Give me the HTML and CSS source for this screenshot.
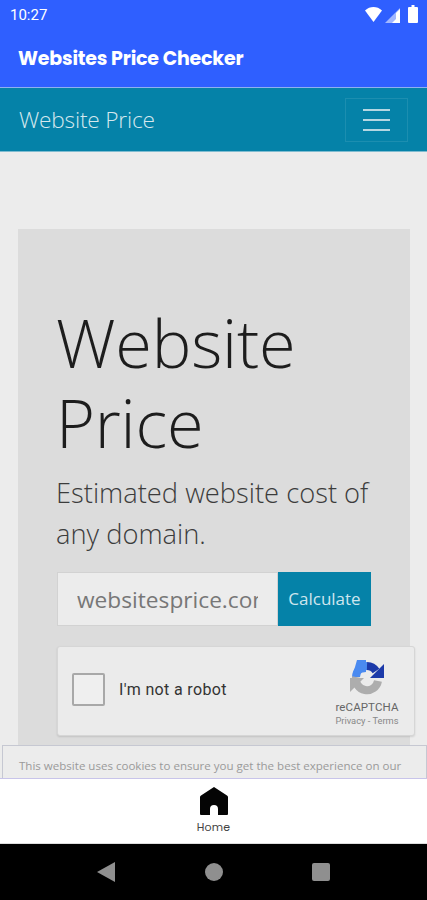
FILE: index.html
```html
<!DOCTYPE html>
<html lang="en">
<head>
<meta charset="utf-8">
<title>Websites Price Checker</title>
<link rel="stylesheet" href="styles.css">
</head>
<body>
<div class="screen">
  <header class="appbar">
    <div class="status">
      <span class="time">10:27</span>
      <svg class="status-icons" width="54" height="18" viewBox="0 0 54 18">
        <path d="M0 5.500C2.500 3 5.500 2 8.500 2S14.500 3 17 5.500L8.500 17Z" fill="#fff"/>
        <path d="M20 18L35 3V18Z" fill="#fff" opacity=".55"/>
        <path d="M27 18L31 14V8L35 4V18Z" fill="#fff"/>
        <path d="M43 3a1 1 0 0 1 1-1h2.500V0h3v2H52a1 1 0 0 1 1 1V17a1 1 0 0 1-1 1h-8a1 1 0 0 1-1-1Z" fill="#fff"/>
      </svg>
    </div>
    <div class="app-title">Websites Price Checker</div>
  </header>
  <main class="web">
    <nav class="site-nav">
      <span class="brand">Website Price</span>
      <span class="toggler"><i></i><i></i><i></i></span>
    </nav>
    <section class="jumbo">
      <h1>Website Price</h1>
      <p class="lead">Estimated website cost of any domain.</p>
      <div class="group">
        <div class="field"><span>websitesprice.com</span></div>
        <div class="calc">Calculate</div>
      </div>
      <div class="captcha">
        <span class="check"></span>
        <span class="robot">I'm not a robot</span>
        <div class="rc">
          <svg width="38" height="38" viewBox="0 0 38 38" fill="none">
            <path d="M8 18A11 11 0 0 1 19 7" stroke="#4a8af0" stroke-width="8"/>
            <path d="M9 1H18V13L5 15Z" fill="#4a8af0"/>
            <path d="M19 7A11 11 0 0 1 28 12" stroke="#1c3aa9" stroke-width="8"/>
            <path d="M36 5V19H22Z" fill="#1c3aa9"/>
            <path d="M30 22A11 11 0 0 1 8 18" stroke="#adadad" stroke-width="8"/>
            <path d="M2 19H16L2 33Z" fill="#adadad"/>
          </svg>
          <span class="rc-name">reCAPTCHA</span>
          <span class="rc-links">Privacy - Terms</span>
        </div>
      </div>
    </section>
    <aside class="cookie">This website uses cookies to ensure you get the best experience on our</aside>
  </main>
  <div class="tabbar">
    <svg width="28" height="28" viewBox="0 0 28 28"><path d="M14 0L27 8.500Q28 9 28 10V27Q28 28 27 28H18V22a4 4 0 0 0-8 0v6H1Q0 28 0 27V10Q0 9 1 8.500Z" fill="#050505"/></svg>
    <span class="tab-label">Home</span>
  </div>
  <div class="sysnav">
    <svg width="18" height="20" viewBox="0 0 18 20"><path d="M18 0V20L0 10Z" fill="#8f8f8f"/></svg>
    <span class="circle"></span>
    <span class="square"></span>
  </div>
</div>
</body>
</html>
```
FILE: styles.css
```css
* { box-sizing: border-box; }
html, body { margin: 0; padding: 0; }
body { width: 427px; height: 900px; overflow: hidden; font-family: "Open Sans", sans-serif; }
.screen { width: 427px; height: 900px; display: flex; flex-direction: column; background: #ececec; }

.appbar { height: 88px; flex: none; background: #2f5fff; color: #fff; border-bottom: 1px solid #8fb0f0; }
.status { height: 31px; padding: 5px 8px 0 10px; display: flex; justify-content: space-between; align-items: flex-start; }
.time { font: 400 15px/20px Roboto, sans-serif; }
.app-title { padding: 15px 0 0 18px; font: 700 19px/26px "Poppins", Inter, sans-serif; letter-spacing: -.2px; }

.web { flex: 1; position: relative; overflow: hidden; min-height: 0; }
.site-nav { height: 64px; background: #0582a8; display: flex; align-items: center; justify-content: space-between; padding: 0 19px 0 19px; border-bottom: 1px solid #7fbcd0; }
.brand { font-size: 22.700px; font-weight: 300; color: #d5e8ee; letter-spacing: -.2px; }
.toggler { width: 63px; height: 44px; margin-top: 1px; border: 1px solid #1c8eb0; display: flex; flex-direction: column; align-items: center; justify-content: center; gap: 8px; }
.toggler i { display: block; width: 27px; height: 2px; background: #b5d7e2; }

.jumbo { margin: 77px 17px 0 18px; background: #dcdcdc; padding: 74px 39px 40px 39px; height: 600px; }
h1 { margin: 0 0 0 -1px; font-size: 66.700px; line-height: 80px; font-weight: 300; color: #1d1d1d; letter-spacing: -.2px; }
.lead { margin: 9px 0 18px -1px; font-size: 27.300px; line-height: 41px; font-weight: 300; color: #3c3c3c; }
.group { display: flex; height: 54px; width: 314px; }
.field { width: 221px; background: #ececec; border: 1px solid #d2d2d2; padding: 0 19px; display: flex; align-items: center; overflow: hidden; }
.field span { font-size: 22.700px; color: #777; white-space: nowrap; overflow: hidden; display: block; width: 183px; }
.calc { flex: 1; background: #0582a8; color: #cfe6ee; font-size: 17px; padding-bottom: 2px; display: flex; align-items: center; justify-content: center; }
.captcha { position: relative; width: 358px; height: 90px; margin: 20px 0 0 0; background: #ebebeb; border: 1px solid #d6d6d6; border-radius: 3px; box-shadow: 0 1px 2px rgba(0,0,0,.12); display: flex; align-items: center; padding: 0 0 3px 14px; }
.check { width: 33px; height: 33px; background: #efefef; border: 2px solid #a8a8a8; border-radius: 2px; flex: none; }
.robot { margin-left: 14px; font: 400 16px/20px Roboto, sans-serif; letter-spacing: .35px; color: #333; }
.rc { position: absolute; right: 14px; top: 12px; width: 66px; display: flex; flex-direction: column; align-items: center; font-family: Roboto, sans-serif; color: #666; }
.rc svg { margin-bottom: 3px; }
.rc-name { font-size: 11.500px; line-height: 14px; letter-spacing: .1px; }
.rc-links { font-size: 9.300px; line-height: 14px; color: #888; white-space: nowrap; }

.cookie { position: absolute; left: 2px; right: 0; top: 657px; height: 40px; background: #ececec; border: 1px solid #c6c8d2; padding: 12px 16px 0 16px; font-size: 11.550px; line-height: 16px; color: #9a9a9a; white-space: nowrap; overflow: hidden; }

.tabbar { height: 66px; flex: none; background: #fff; border-top: 1px solid #c8c4ea; border-bottom: 1px solid #ddd; display: flex; flex-direction: column; align-items: center; padding-top: 8px; }
.tab-label { font: 400 11px/14px "Poppins", Inter, sans-serif; color: #444; margin-top: 5px; letter-spacing: .2px; }
.sysnav { height: 56px; flex: none; background: #000; display: flex; align-items: center; justify-content: center; gap: 90px; }
.circle { width: 18px; height: 18px; border-radius: 50%; background: #8f8f8f; }
.square { width: 18px; height: 18px; border-radius: 2px; background: #8f8f8f; margin-left: -1px; }
```
